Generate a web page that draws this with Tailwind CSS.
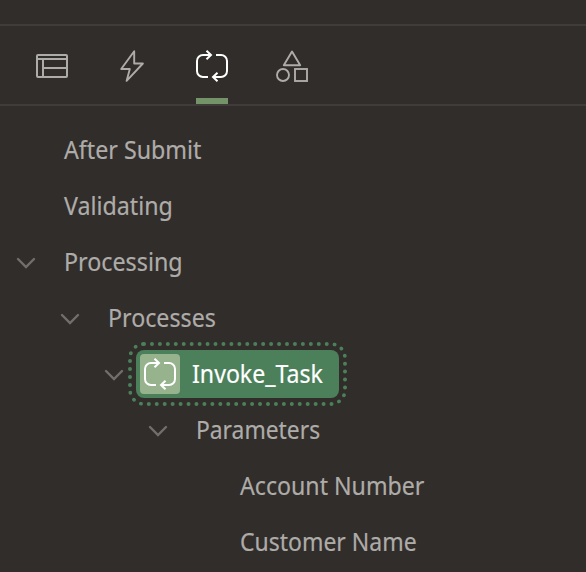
<!DOCTYPE html>
<html lang="en">
<head>
<meta charset="utf-8">
<title>Process tree</title>
<script src="https://cdn.jsdelivr.net/npm/@tailwindcss/browser@4"></script>
</head>
<body class="w-[586px] h-[572px] overflow-hidden bg-[#312d2a] text-[#aeaca9] font-['Noto_Sans','Open_Sans',sans-serif] text-[25px]">
<svg class="hidden">
  <symbol id="loop" viewBox="0 0 32 32"><path d="M12 27H7a6 6 0 0 1-6-6V11a6 6 0 0 1 6-6h8M10.500 .7l4.500 4.300-4.500 4.300M20 5H25a6 6 0 0 1 6 6v10a6 6 0 0 1-6 6h-8M21.500 22.700L17 27l4.500 4.300" fill="none" stroke="currentColor" stroke-width="2"/></symbol>
  <symbol id="chevron" viewBox="0 0 20 12"><path d="M2 2l8 8 8-8" fill="none" stroke="currentColor" stroke-width="2.400" stroke-linecap="round"/></symbol>
</svg>
<header class="mt-6 h-[82px] border-y-2 border-[#403c39] flex pl-9 gap-12">
  <div class="w-8 flex items-center pt-[2px]"><svg class="size-8" viewBox="0 0 32 32" fill="none" stroke="currentColor" stroke-width="2"><rect x="1" y="5" width="30" height="22" rx="1"/><path d="M1 9h30M7 9v18M7 18h24"/></svg></div>
  <div class="w-8 flex items-center pt-[2px]"><svg class="size-8" viewBox="0 0 32 32" fill="none" stroke="currentColor" stroke-width="1.900" stroke-linejoin="round"><path d="M18.200 1.300L5.200 19H13.800L10.600 30.900 26.900 13.500H18.200Z"/></svg></div>
  <div class="w-8 flex flex-col text-white"><svg class="size-8 mt-6"><use href="#loop"/></svg><div class="mt-4 h-1.5 bg-[#759368]"></div></div>
  <div class="w-8 flex items-center pt-[2px]"><svg class="size-8" viewBox="0 0 32 32" fill="none" stroke="currentColor" stroke-width="1.900"><path d="M16 1.600L24.200 15.200H7.800Z" stroke-linejoin="round"/><circle cx="7" cy="25" r="6"/><rect x="19" y="19" width="12" height="12"/></svg></div>
</header>
<main class="pt-4 whitespace-nowrap leading-[56px] [-webkit-text-stroke:0.2px_currentColor]">
  <div class="h-14 pl-16"><span class="inline-block origin-left -translate-y-px scale-x-[0.929]">After Submit</span></div>
  <div class="h-14 pl-16"><span class="inline-block origin-left -translate-y-px scale-x-[0.929]">Validating</span></div>
  <div class="h-14 pl-4 flex items-center"><svg class="w-5 h-3 mr-7 mt-px text-[#716e6b]"><use href="#chevron"/></svg><span class="inline-block origin-left -translate-y-px scale-x-[0.931]">Processing</span></div>
  <div class="h-14 pl-15 flex items-center"><svg class="w-5 h-3 mr-7 mt-px text-[#716e6b]"><use href="#chevron"/></svg><span class="inline-block origin-left -translate-y-px scale-x-[0.928]">Processes</span></div>
  <div class="h-14 pl-[104px] flex items-center"><svg class="w-5 h-3 mr-3 mt-px text-[#716e6b]"><use href="#chevron"/></svg>
    <div class="w-[203px] h-12 p-1 rounded-[8px] bg-[#4b805b] text-white flex items-center outline-4 outline-dotted outline-offset-4 outline-[#4b805b]">
      <div class="size-10 shrink-0 mr-3 rounded-[4px] bg-[#97b38d] p-1"><svg class="size-8"><use href="#loop"/></svg></div>
      <span class="inline-block origin-left -translate-y-px scale-x-[0.925]">Invoke_Task</span>
    </div>
  </div>
  <div class="h-14 pl-[148px] flex items-center"><svg class="w-5 h-3 mr-7 mt-px text-[#716e6b]"><use href="#chevron"/></svg><span class="inline-block origin-left -translate-y-px scale-x-[0.913]">Parameters</span></div>
  <div class="h-14 pl-60"><span class="inline-block origin-left -translate-y-px scale-x-[0.926]">Account Number</span></div>
  <div class="h-14 pl-60"><span class="inline-block origin-left -translate-y-px scale-x-[0.919]">Customer Name</span></div>
</main>
</body>
</html>
